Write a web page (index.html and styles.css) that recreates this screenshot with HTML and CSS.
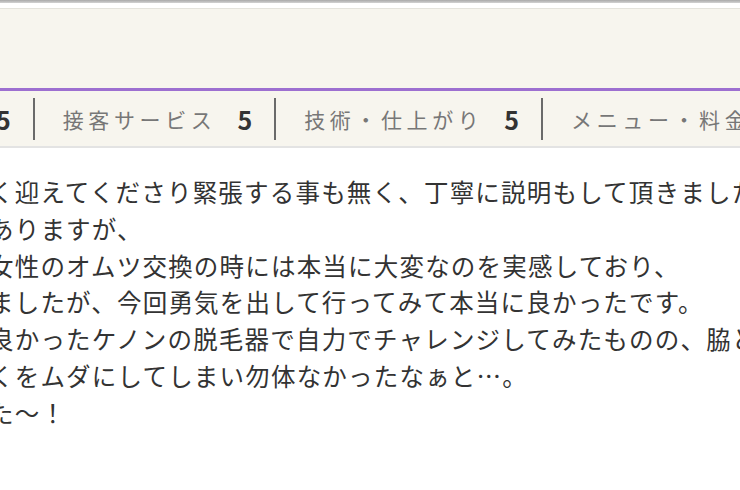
FILE: index.html
```html
<!DOCTYPE html>
<html lang="ja">
<head>
    <meta charset="UTF-8">
    <meta name="viewport" content="width=device-width, initial-scale=1.0">
    <title>口コミ</title>
    <link rel="stylesheet" href="styles.css">
</head>
<body>

    <div class="topline"></div>

    <!-- review header box -->
    <div class="headbox"></div>

    <!-- rating summary row -->
    <div class="ratings">
        <div class="rate rate-first"><span class="score">5</span></div>
        <div class="rate"><span class="label">接客サービス</span><span class="score">5</span></div>
        <div class="rate"><span class="label">技術・仕上がり</span><span class="score">5</span></div>
        <div class="rate"><span class="label">メニュー・料金</span><span class="score">5</span></div>
    </div>

    <!-- review body -->
    <div class="review">
        <p>
            く迎えてくださり緊張する事も無く、丁寧に説明もして頂きました。<br>
            ありますが、<br>
            女性のオムツ交換の時には本当に大変なのを実感しており、<br>
            ましたが、今回勇気を出して行ってみて本当に良かったです。<br>
            良かったケノンの脱毛器で自力でチャレンジしてみたものの、脇と<br>
            くをムダにしてしまい勿体なかったなぁと…。<br>
            た〜！
        </p>
    </div>

</body>
</html>
```

FILE: styles.css
```css
html, body {
    overflow: hidden;
}
body {
    margin: 0;
    background-color: #ffffff;
    font-family: "Noto Sans CJK JP", "Noto Sans", sans-serif;
    color: #333333;
}
.topline {
    height: 3px;
    background: linear-gradient(#a9a9a9, #d2d2d2);
    margin-bottom: 5px;
}
.headbox {
    height: 80px;
    background-color: #f7f5ee;
    border-top: 1px solid #e4e3dc;
}
.ratings {
    display: flex;
    align-items: center;
    height: 55px;
    background-color: #f7f5ee;
    border-top: 3px solid #9d6fd0;
    border-bottom: 2px solid #e3e3e3;
    white-space: nowrap;
    margin-top: -1px;
}
.rate {
    display: flex;
    align-items: center;
    height: 42px;
    padding: 0 22px 0 28px;
    border-left: 2px solid #6a6a6a;
}
.rate-first {
    border-left: none;
    padding-left: 0;
    margin-left: -4px;
}
.label {
    font-size: 21px;
    letter-spacing: 4.6px;
    color: #777777;
}
.score {
    font-size: 25px;
    font-weight: bold;
    color: #333333;
    margin-left: 21px;
}
.rate-first .score {
    margin-left: 0;
}
.review {
    padding-top: 26px;
    margin-left: -11px;
}
.review p {
    margin: 0;
    font-size: 24.5px;
    letter-spacing: 1.2px;
    line-height: 36.8px;
    white-space: nowrap;
}
```
